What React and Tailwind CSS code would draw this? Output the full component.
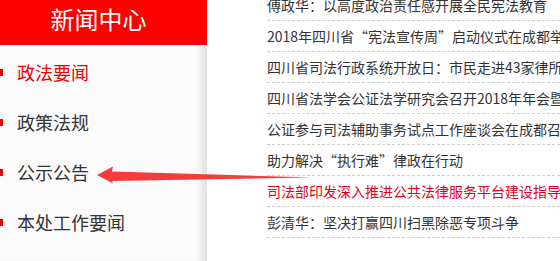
const menu = [
  { label: "政法要闻", active: true },
  { label: "政策法规" },
  { label: "公示公告" },
  { label: "本处工作要闻" },
];

const news = [
  { title: "傅政华：以高度政治责任感开展全民宪法教育" },
  { title: "2018年四川省“宪法宣传周”启动仪式在成都举行" },
  { title: "四川省司法行政系统开放日：市民走进43家律所" },
  { title: "四川省法学会公证法学研究会召开2018年年会暨" },
  { title: "公证参与司法辅助事务试点工作座谈会在成都召开" },
  { title: "助力解决“执行难”律政在行动" },
  { title: "司法部印发深入推进公共法律服务平台建设指导意见", hot: true },
  { title: "彭清华：坚决打赢四川扫黑除恶专项斗争" },
];

export default function App() {
  return (
    <div
      lang="zh-CN"
      className="relative w-[560px] h-[261px] overflow-hidden bg-white flex"
      style={{ fontFamily: '"Noto Sans CJK SC", "Noto Sans", sans-serif' }}
    >
      {/* sidebar */}
      <div className="w-[207px] shrink-0 flex flex-col bg-[#fafafa] shadow-[inset_-10px_0_8px_-6px_rgba(0,0,0,0.13)]">
        <div className="h-[45px] bg-[#fd0000] text-white text-[24px] leading-[24px] pt-[7px] pr-[10px] flex justify-center">
          新闻中心
        </div>
        <ul className="pt-[2px]">
          {menu.map((m) => (
            <li key={m.label} className="h-[50px] flex items-center">
              <span className="w-[3px] h-[7px] bg-[#f00000]" />
              <span
                className={
                  "ml-[14px] text-[18px] leading-[20px] " +
                  (m.active ? "text-[#f00000]" : "text-[#333]")
                }
              >
                {m.label}
              </span>
            </li>
          ))}
        </ul>
      </div>

      {/* news list */}
      <ul className="flex-1 min-w-0 pl-[60px] mt-[-10px]">
        {news.map((n) => (
          <li
            key={n.title}
            className={
              "h-[31px] border-b border-dashed border-[#cccccc] text-[14px] leading-[30px] whitespace-nowrap " +
              (n.hot ? "text-[#e3001b]" : "text-[#333]")
            }
          >
            {n.title}
          </li>
        ))}
      </ul>

      {/* annotation arrow */}
      <svg className="absolute inset-0 pointer-events-none" width="560" height="261">
        <polygon
          points="97,175 113,166.5 112,171.5 312,177.5 112,181 113,183.5"
          fill="#f53b3b"
        />
      </svg>
    </div>
  );
}
